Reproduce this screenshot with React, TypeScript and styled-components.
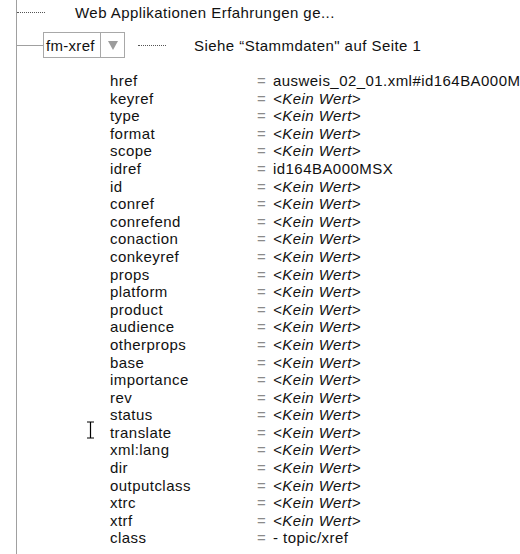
import { Fragment } from 'react';
import { createGlobalStyle, styled } from 'styled-components';

const GlobalStyle = createGlobalStyle`
  html, body {
    margin: 0;
    padding: 0;
    background: #ffffff;
  }
  body {
    font-family: "Liberation Sans", Arial, sans-serif;
    font-size: 15px;
    letter-spacing: 0.45px;
    color: #111111;
    overflow: hidden;
  }
`;

const Tree = styled.div`
  margin-left: 16px;
  border-left: 1px solid #a0a0a0;
  min-height: 554px;
  box-sizing: border-box;
  position: relative;
`;

const NodeRow = styled.div<{ $top?: number; $height: number }>`
  display: flex;
  align-items: center;
  height: ${(p) => p.$height}px;
  margin-top: ${(p) => p.$top ?? 0}px;
  white-space: nowrap;
`;

const Connector = styled.span<{ $width: number; $dotted?: boolean; $gap?: number }>`
  display: block;
  width: ${(p) => p.$width}px;
  margin-left: ${(p) => p.$gap ?? 0}px;
  border-top: 1px ${(p) => (p.$dotted ? 'dotted #555' : 'solid #a0a0a0')};
`;

const NodeText = styled.span<{ $gap: number }>`
  margin-left: ${(p) => p.$gap}px;
`;

const ElementBox = styled.div`
  display: flex;
  height: 26px;
  box-sizing: border-box;
  border: 1px solid #a8a8a8;
  background: #fff;
`;

const ElementName = styled.span`
  display: flex;
  align-items: center;
  width: 54px;
  padding-left: 2px;
  letter-spacing: 0.3px;
  border-right: 1px solid #a8a8a8;
`;

const DropButton = styled.span`
  display: flex;
  align-items: center;
  justify-content: center;
  width: 23px;
`;

const Triangle = styled.span`
  width: 0;
  height: 0;
  border-left: 5px solid transparent;
  border-right: 5px solid transparent;
  border-top: 9px solid #9c9c9c;
`;

const AttrList = styled.div`
  display: grid;
  grid-template-columns: 147px 16px auto;
  margin-top: 14px;
  padding-left: 93px;
  line-height: 17.6px;
  white-space: nowrap;
`;

const AttrName = styled.span``;

const Equals = styled.span`
  color: #8a8a8a;
`;

const AttrValue = styled.span<{ $empty: boolean }>`
  font-style: ${(p) => (p.$empty ? 'italic' : 'normal')};
`;

const Cursor = styled.svg`
  position: absolute;
  left: 69px;
  top: 421px;
`;

const attrs: [string, string | null][] = [
  ['href', 'ausweis_02_01.xml#id164BA000MSX'],
  ['keyref', null],
  ['type', null],
  ['format', null],
  ['scope', null],
  ['idref', 'id164BA000MSX'],
  ['id', null],
  ['conref', null],
  ['conrefend', null],
  ['conaction', null],
  ['conkeyref', null],
  ['props', null],
  ['platform', null],
  ['product', null],
  ['audience', null],
  ['otherprops', null],
  ['base', null],
  ['importance', null],
  ['rev', null],
  ['status', null],
  ['translate', null],
  ['xml:lang', null],
  ['dir', null],
  ['outputclass', null],
  ['xtrc', null],
  ['xtrf', null],
  ['class', '- topic/xref'],
];

export default function App() {
  return (
    <>
      <GlobalStyle />
      <Tree>
        <NodeRow $height={24}>
          <Connector $width={28} $dotted />
          <NodeText $gap={30}>Web Applikationen Erfahrungen ge...</NodeText>
        </NodeRow>

        <NodeRow $top={8} $height={26}>
          <Connector $width={26} />
          <ElementBox>
            <ElementName>fm-xref</ElementName>
            <DropButton>
              <Triangle />
            </DropButton>
          </ElementBox>
          <Connector $width={28} $dotted $gap={13} />
          <NodeText $gap={28}>Siehe “Stammdaten" auf Seite 1</NodeText>
        </NodeRow>

        <AttrList>
          {attrs.map(([name, value]) => (
            <Fragment key={name}>
              <AttrName>{name}</AttrName>
              <Equals>=</Equals>
              <AttrValue $empty={value === null}>{value ?? '<Kein Wert>'}</AttrValue>
            </Fragment>
          ))}
        </AttrList>

        <Cursor width="9" height="18" viewBox="0 0 9 18">
          <path d="M1 1h7M4.5 1v16M1 17h7" stroke="#000" strokeWidth="1.2" fill="none" />
        </Cursor>
      </Tree>
    </>
  );
}
